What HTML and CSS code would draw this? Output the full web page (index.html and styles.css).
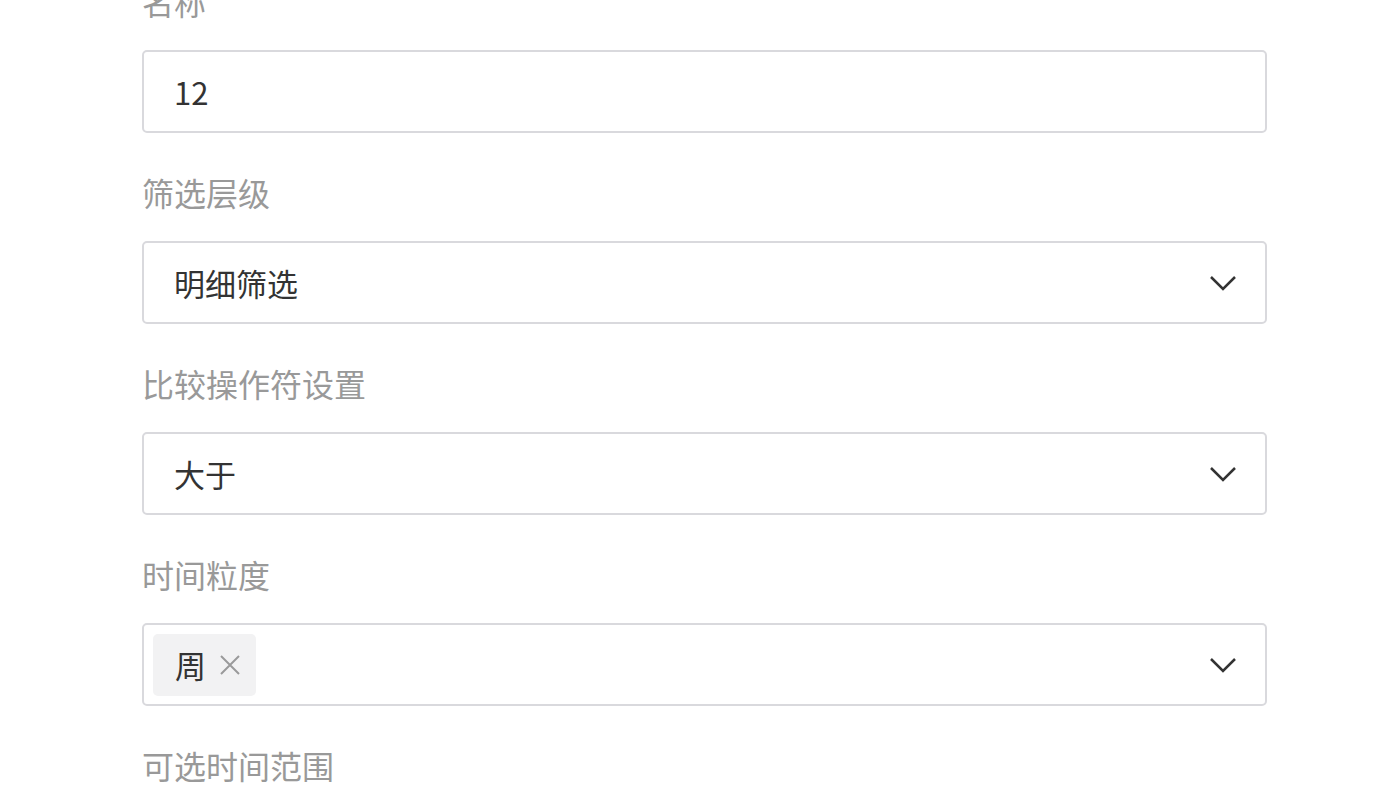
FILE: index.html
```html
<!DOCTYPE html>
<html lang="zh-CN">
<head>
    <meta charset="UTF-8">
    <meta name="viewport" content="width=device-width, initial-scale=1.0">
    <title>筛选设置</title>
    <link rel="stylesheet" href="styles.css">
</head>
<body>

    <form class="filter-form">
        <div class="field">
            <label class="field-label" for="name">名称</label>
            <input id="name" class="field-box field-input" type="text" value="12">
        </div>

        <div class="field">
            <div class="field-label">筛选层级</div>
            <div class="field-box select">
                <span class="select-value">明细筛选</span>
                <svg class="chevron" viewBox="0 0 28 16"><path d="M2 2 L14 14 L26 2"/></svg>
            </div>
        </div>

        <div class="field">
            <div class="field-label">比较操作符设置</div>
            <div class="field-box select">
                <span class="select-value">大于</span>
                <svg class="chevron" viewBox="0 0 28 16"><path d="M2 2 L14 14 L26 2"/></svg>
            </div>
        </div>

        <div class="field">
            <div class="field-label">时间粒度</div>
            <div class="field-box select multi">
                <span class="tag">
                    周
                    <svg class="tag-close" viewBox="0 0 20 20"><path d="M1 1 L19 19 M19 1 L1 19"/></svg>
                </span>
                <svg class="chevron" viewBox="0 0 28 16"><path d="M2 2 L14 14 L26 2"/></svg>
            </div>
        </div>

        <div class="field">
            <div class="field-label">可选时间范围</div>
        </div>
    </form>

</body>
</html>
```

FILE: styles.css
```css
body {
    margin: 0;
    background-color: #ffffff;
    font-family: "Noto Sans CJK SC", "Noto Sans", sans-serif;
    overflow: hidden;
}

.filter-form {
    width: 1125px;
    margin: -19px 0 0 142px;
}

.field {
    display: flex;
    flex-direction: column;
    margin-bottom: 39px;
}

.field-label {
    font-size: 32px;
    line-height: 40px;
    color: #999999;
    margin-bottom: 29px;
}

.field-box {
    box-sizing: border-box;
    width: 100%;
    height: 83px;
    border: 2px solid #d9d9dd;
    border-radius: 5px;
    background: #ffffff;
    font-family: inherit;
    font-size: 31px;
    color: #333333;
}

.field-input {
    padding: 0 30px;
    outline: none;
}

.select {
    display: flex;
    align-items: center;
    justify-content: space-between;
    padding: 0 28px 0 30px;
}

.select.multi {
    padding-left: 9px;
}

.chevron {
    width: 28px;
    height: 16px;
    fill: none;
    stroke: #333333;
    stroke-width: 2.5;
}

.tag {
    display: flex;
    align-items: center;
    gap: 14px;
    height: 62px;
    padding: 0 16px 0 22px;
    background: #f2f2f3;
    border-radius: 5px;
    color: #333333;
}

.tag-close {
    width: 20px;
    height: 20px;
    fill: none;
    stroke: #9a9a9a;
    stroke-width: 2;
}
```
